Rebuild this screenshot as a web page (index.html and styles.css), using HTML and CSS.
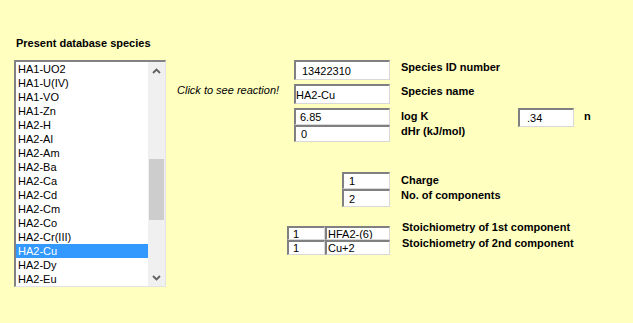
FILE: index.html
```html
<!DOCTYPE html>
<html>
<head>
<meta charset="utf-8">
<link rel="stylesheet" href="styles.css">
</head>
<body>
<div class="page">
  <div class="left">
    <div class="title">Present database species</div>
    <div class="listbox">
      <div class="items">
        <div class="item">HA1-UO2</div>
        <div class="item">HA1-U(IV)</div>
        <div class="item">HA1-VO</div>
        <div class="item">HA1-Zn</div>
        <div class="item">HA2-H</div>
        <div class="item">HA2-Al</div>
        <div class="item">HA2-Am</div>
        <div class="item">HA2-Ba</div>
        <div class="item">HA2-Ca</div>
        <div class="item">HA2-Cd</div>
        <div class="item">HA2-Cm</div>
        <div class="item">HA2-Co</div>
        <div class="item">HA2-Cr(III)</div>
        <div class="item sel">HA2-Cu</div>
        <div class="item">HA2-Dy</div>
        <div class="item">HA2-Eu</div>
      </div>
      <div class="scrollbar">
        <div class="sb-btn"><svg width="9" height="6" viewBox="0 0 9 6"><path d="M1 5 L4.5 1.5 L8 5" fill="none" stroke="#606060" stroke-width="1.8"/></svg></div>
        <div class="sb-space"></div>
        <div class="sb-thumb"></div>
        <div class="sb-fill"></div>
        <div class="sb-btn"><svg width="9" height="6" viewBox="0 0 9 6"><path d="M1 1 L4.5 4.5 L8 1" fill="none" stroke="#606060" stroke-width="1.8"/></svg></div>
      </div>
    </div>
  </div>
  <div class="hint">Click to see reaction!</div>
  <div class="form">
    <div class="sec sec-id">
      <div class="inputs"><div class="field w96 h20 p6">13422310</div></div>
      <div class="labels lh13">Species ID number</div>
    </div>
    <div class="sec sec-name">
      <div class="inputs"><div class="field w96 h20 p0">HA2-Cu</div></div>
      <div class="labels lh13">Species name</div>
    </div>
    <div class="sec sec-k">
      <div class="inputs">
        <div class="field w96 h17 p4">6.85</div>
        <div class="field w96 h17 p5">0</div>
      </div>
      <div class="labels lh15 wk">
        <div>log K</div>
        <div>dHr (kJ/mol)</div>
      </div>
      <div class="field w56 h19 p7">.34</div>
      <div class="labels lh15 nlabel">n</div>
    </div>
    <div class="sec sec-charge">
      <div class="inputs">
        <div class="field w48 h17 p5">1</div>
        <div class="field w48 h18 p5">2</div>
      </div>
      <div class="labels lh15">
        <div>Charge</div>
        <div>No. of components</div>
      </div>
    </div>
    <div class="sec sec-stoich">
      <div class="inputs">
        <div class="pair">
          <div class="field w38 h14 p4">1</div>
          <div class="field w65 h14 p1">HFA2-(6)</div>
        </div>
        <div class="pair">
          <div class="field w38 h15 p4">1</div>
          <div class="field w65 h15 p1">Cu+2</div>
        </div>
      </div>
      <div class="labels lh16 stoich-labels">
        <div>Stoichiometry of 1st component</div>
        <div>Stoichiometry of 2nd component</div>
      </div>
    </div>
  </div>
</div>
</body>
</html>
```

FILE: styles.css
```css
html, body {
  margin: 0;
  background: #ffffc0;
}
body {
  font-family: "Liberation Sans", Arial, sans-serif;
  font-size: 11px;
  color: #000;
}
.page {
  display: flex;
  align-items: flex-start;
  padding: 37px 0 0 14px;
}
.left {
  width: 152px;
  flex: none;
}
.title {
  font-weight: bold;
  line-height: 13px;
  padding-left: 2px;
  margin-bottom: 10px;
  white-space: nowrap;
}
.listbox {
  display: flex;
  height: 227px;
  box-sizing: border-box;
  border-style: solid;
  border-width: 2px 1px 1px 2px;
  border-color: #828282 #e3e3e3 #e3e3e3 #828282;
  background: #fff;
}
.items {
  width: 132px;
  overflow: hidden;
}
.item {
  height: 14px;
  line-height: 14px;
  padding-left: 2px;
  white-space: nowrap;
}
.item.sel {
  background: #3399ff;
  color: #fff;
}
.scrollbar {
  width: 17px;
  background: #f0f0f0;
  display: flex;
  flex-direction: column;
}
.sb-btn {
  height: 17px;
  display: flex;
  align-items: center;
  justify-content: center;
}
.sb-space {
  height: 80px;
}
.sb-thumb {
  height: 61px;
  margin: 0 1px;
  background: #cdcdcd;
}
.sb-fill {
  flex: 1;
}
.hint {
  width: 110px;
  flex: none;
  margin-left: 11px;
  margin-top: 47px;
  line-height: 13px;
  font-style: italic;
  white-space: nowrap;
}
.form {
  margin-top: 23px;
  display: flex;
  flex-direction: column;
}
.sec {
  display: flex;
  align-items: flex-start;
}
.sec-id, .sec-name {
  margin-bottom: 4px;
}
.sec-k {
  margin-bottom: 30px;
}
.sec-charge {
  margin-bottom: 19px;
}
.inputs {
  width: 103px;
  flex: none;
  display: flex;
  flex-direction: column;
  align-items: flex-end;
}
.pair {
  display: flex;
}
.labels {
  margin-left: 11px;
  font-weight: bold;
  white-space: nowrap;
}
.lh13 { line-height: 13px; padding-top: 1px; }
.lh15 { line-height: 15px; padding-top: 1px; }
.lh16 { line-height: 16px; }
.wk { width: 117px; }
.stoich-labels { margin-top: -7px; margin-left: 12px; }
.nlabel { margin-left: 10px; }
.field {
  box-sizing: border-box;
  background: #fff;
  border-style: solid;
  border-width: 2px 1px 1px 2px;
  border-color: #808080 #d8d8d8 #d8d8d8 #808080;
  display: flex;
  align-items: center;
  white-space: nowrap;
  overflow: hidden;
}
.w96 { width: 96px; }
.w56 { width: 56px; }
.w48 { width: 48px; }
.w38 { width: 38px; }
.w65 { width: 65px; }
.h20 { height: 20px; }
.h19 { height: 19px; }
.h18 { height: 18px; }
.h17 { height: 17px; }
.h15 { height: 15px; }
.h14 { height: 14px; }
.p0 { padding-left: 0; }
.p1 { padding-left: 1px; }
.p4 { padding-left: 4px; }
.p5 { padding-left: 5px; }
.p6 { padding-left: 6px; }
.p7 { padding-left: 7px; }
```
